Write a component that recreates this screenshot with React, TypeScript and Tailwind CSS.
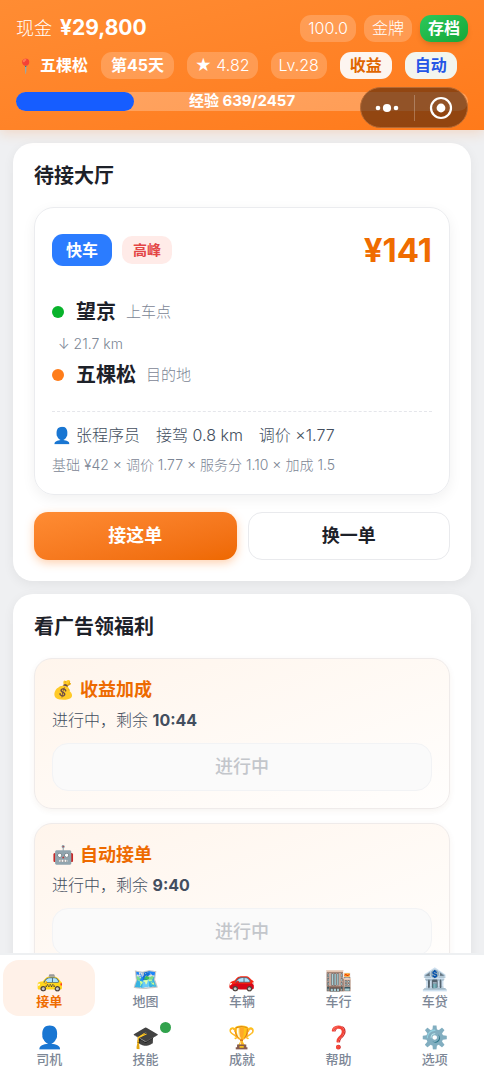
import clsx from "clsx";

const promos = [
    { icon: "💰", title: "收益加成", left: "10:44" },
    { icon: "🤖", title: "自动接单", left: "9:40" },
];

const tabs = [
    { icon: "🚕", label: "接单", active: true },
    { icon: "🗺️", label: "地图" },
    { icon: "🚗", label: "车辆" },
    { icon: "🏬", label: "车行" },
    { icon: "🏦", label: "车贷" },
    { icon: "👤", label: "司机" },
    { icon: "🎓", label: "技能", dot: true },
    { icon: "🏆", label: "成就" },
    { icon: "❓", label: "帮助" },
    { icon: "⚙️", label: "选项" },
];

function Header() {
    return (
        <header className="relative z-10 shrink-0 bg-linear-to-br from-[#ff8c33] to-[#ff7a1a] px-4 pt-[15px] pb-[19px] text-white shadow-[0_3px_12px_rgba(255,122,26,0.2)]">
            <div className="flex h-[27px] items-center gap-2">
                <div className="mr-auto flex items-center gap-2 text-lg font-light">
                    现金 <strong className="text-[21px] font-bold">¥29,800</strong>
                </div>
                <span className="rounded-[11px] bg-white/20 px-2 text-base leading-[27px] font-light">100.0</span>
                <span className="rounded-[11px] bg-white/20 px-2 text-base leading-[27px] font-light">金牌</span>
                <button className="rounded-[11px] bg-linear-to-br from-[#2bc95a] to-[#16a638] px-2 text-base leading-[27px] font-bold shadow-md">存档</button>
            </div>
            <div className="mt-[10px] flex h-[27px] items-center gap-[13px] text-base leading-[27px]">
                <span className="flex items-center gap-1.5 pl-px font-bold">
                    <span className="text-sm">📍</span>五棵松
                </span>
                <span className="rounded-[11px] bg-white/20 px-2.5 font-bold">第45天</span>
                <span className="rounded-[11px] bg-white/20 px-2 font-light">★ 4.82</span>
                <span className="rounded-[11px] bg-white/20 px-2 font-light">Lv.28</span>
                <button className="rounded-[11px] bg-[#fdf5f0] px-2.5 font-bold text-[#e06600]">收益</button>
                <button className="rounded-[11px] bg-[#f3f5ee] px-2.5 font-bold text-[#2456e6]">自动</button>
            </div>
            <div className="relative mt-[13px] h-[19px] rounded-full bg-white/25">
                <div className="h-full rounded-full bg-[#165dff]" style={{ width: `${(639 / 2457) * 100}%` }} />
                <span className="absolute inset-0 flex items-center justify-center text-[15px] font-bold">经验 639/2457</span>
            </div>

            {/* mini program capsule */}
            <div className="absolute right-4 bottom-0.5 flex h-[41px] w-[108px] items-center rounded-full border border-[#b56a35] bg-[#4a2108]/60">
                <button aria-label="更多" className="flex flex-1 justify-center">
                    <svg width="24" height="10" viewBox="0 0 24 10" fill="white">
                        <circle cx="3" cy="5" r="2.3" />
                        <circle cx="12" cy="5" r="4.1" />
                        <circle cx="21" cy="5" r="2.3" />
                    </svg>
                </button>
                <span className="h-[26px] w-px bg-white/25" />
                <button aria-label="关闭" className="flex flex-1 justify-center">
                    <svg width="24" height="24" viewBox="0 0 24 24">
                        <circle cx="12" cy="12" r="10" fill="none" stroke="white" strokeWidth="2.2" />
                        <circle cx="12" cy="12" r="4.4" fill="white" />
                    </svg>
                </button>
            </div>
        </header>
    );
}

function OrderHall() {
    return (
        <section className="rounded-[20px] bg-white p-[21px] shadow-[0_3px_12px_rgba(0,0,0,0.06)]">
            <h2 className="text-xl leading-6 font-bold">待接大厅</h2>

            <div className="mt-[19px] rounded-[20px] border border-[#ebecef] px-[17px] pt-[22px] pb-[15px] shadow-[0_4px_14px_rgba(0,0,0,0.06)]">
                <div className="flex h-10 items-center">
                    <span className="rounded-[11px] bg-[#2b7cff] px-3.5 text-base leading-8 font-bold text-white">快车</span>
                    <span className="ml-[10px] rounded-[10px] bg-[#ffebe8] px-[11px] text-sm leading-7 font-bold text-[#e34545]">高峰</span>
                    <strong className="ml-auto text-[33px] leading-10 font-bold text-[#ef6c00]">¥141</strong>
                </div>

                <div className="mt-[26px] flex h-8 items-center">
                    <i className="size-3 rounded-full bg-[#08b32b]" />
                    <b className="ml-3 text-xl">望京</b>
                    <span className="ml-2.5 text-[15px] font-light text-[#7c8695]">上车点</span>
                </div>
                <div className="pl-1.5 text-sm leading-[31px] font-light text-[#7c8695]">↓ 21.7 km</div>
                <div className="flex h-8 items-center">
                    <i className="size-3 rounded-full bg-[#ff7d1a]" />
                    <b className="ml-3 text-xl">五棵松</b>
                    <span className="ml-2.5 text-[15px] font-light text-[#7c8695]">目的地</span>
                </div>

                <div className="mt-5 border-t border-dashed border-[#e5e6eb] pt-2">
                    <div className="flex gap-4 text-base leading-[31px] font-light text-[#434e5e]">
                        <span className="flex gap-1"><span>👤</span>张程序员</span>
                        <span>接驾 0.8 km</span>
                        <span>调价 ×1.77</span>
                    </div>
                    <div className="text-sm leading-7 font-light text-[#7c8695]">基础 ¥42 × 调价 1.77 × 服务分 1.10 × 加成 1.5</div>
                </div>
            </div>

            <div className="mt-[17px] grid grid-cols-2 gap-[11px] text-lg font-bold">
                <button className="h-12 rounded-[14px] bg-linear-to-br from-[#ff8c33] to-[#ee6800] text-white shadow-[0_3px_10px_rgba(255,122,26,0.35)]">接这单</button>
                <button className="h-12 rounded-[14px] border border-[#e9eaed] bg-white">换一单</button>
            </div>
        </section>
    );
}

function Promos() {
    return (
        <section className="rounded-[20px] bg-white p-[21px] shadow-[0_3px_12px_rgba(0,0,0,0.06)]">
            <h2 className="text-xl leading-6 font-bold">看广告领福利</h2>
            <div className="mt-[19px] flex flex-col gap-[14px]">
                {promos.map((promo) => (
                    <div key={promo.title} className="rounded-[18px] border border-[#efebea] bg-linear-to-br from-[#fff5ec] to-[#fffefd] p-[17px] shadow-[0_2px_6px_rgba(120,60,20,0.06)]">
                        <h3 className="flex items-center gap-1.5 text-lg leading-7 font-bold text-[#ed6a00]">
                            <span>{promo.icon}</span>{promo.title}
                        </h3>
                        <p className="mt-0.5 text-base leading-7 font-light text-[#434e5e]">
                            进行中，剩余 <b className="font-bold">{promo.left}</b>
                        </p>
                        <button disabled className="mt-[9px] block h-12 w-full rounded-[16px] border border-[#f2f3f5] bg-[#fafafa] text-lg font-medium text-[#c3c6cb]">进行中</button>
                    </div>
                ))}
            </div>
        </section>
    );
}

function TabBar() {
    return (
        <nav className="relative z-10 grid shrink-0 grid-cols-5 gap-y-0.5 border-t-2 border-[#eef0f2] bg-white px-px pt-[5px] pb-1.5">
            {tabs.map((tab) => (
                <button
                    key={tab.label}
                    className={clsx(
                        "mx-0.5 flex h-14 flex-col items-center rounded-[16px] pt-1.5 text-[13px]",
                        tab.active ? "bg-[#fff1e8] font-bold text-[#ef6c00]" : "font-medium text-[#7d8796]"
                    )}
                >
                    <span className="relative text-[22px] leading-[27px]">
                        {tab.icon}
                        {tab.dot && <i className="absolute -top-0.5 -right-3 size-[11px] rounded-full bg-[#31a24c]" />}
                    </span>
                    <span className="leading-4">{tab.label}</span>
                </button>
            ))}
        </nav>
    );
}

export default function App() {
    return (
        <div className="flex h-screen flex-col bg-[#eff0f2] font-['Inter','Noto_Sans_CJK_SC',sans-serif] text-[#1d2129]">
            <Header />
            <main className="flex min-h-0 flex-1 flex-col gap-[13px] overflow-y-auto p-[13px] [scrollbar-width:none] *:shrink-0">
                <OrderHall />
                <Promos />
            </main>
            <TabBar />
        </div>
    );
}
